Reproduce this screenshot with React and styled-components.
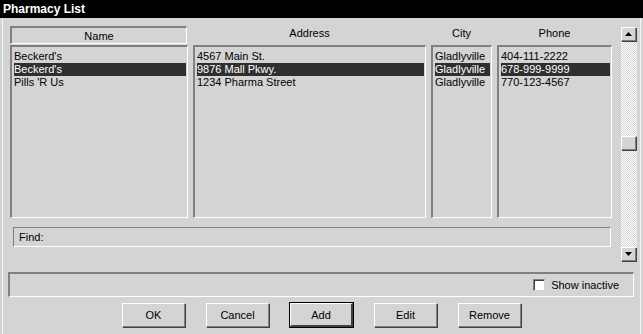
import React from 'react';
import styled, {createGlobalStyle, css} from 'styled-components';

const GlobalStyle = createGlobalStyle`
  html, body {
    margin: 0;
    padding: 0;
    background: #d4d4d4;
  }
  body {
    font-family: "Liberation Sans", Arial, sans-serif;
    font-size: 11px;
    color: #000;
  }
`;

const sunken = css`
  border-top: 2px solid #808080;
  border-left: 2px solid #808080;
  border-right: 1px solid #fff;
  border-bottom: 1px solid #fff;
`;

const raised = css`
  border-top: 1px solid #fff;
  border-left: 1px solid #fff;
  border-right: 1px solid #808080;
  border-bottom: 1px solid #808080;
  box-shadow: 1px 1px 0 #404040;
`;

const Window = styled.div`
  width: 643px;
  height: 334px;
  display: flex;
  flex-direction: column;
  background: #d4d4d4;
  box-shadow: inset 2px 0 0 #d4d4d4, inset 3px 0 0 #f4f4f4, inset -2px 0 0 #d4d4d4, inset -3px 0 0 #f4f4f4;
  overflow: hidden;
`;

const TitleBar = styled.div`
  height: 18px;
  background: #000;
  color: #fff;
  font-weight: bold;
  font-size: 12px;
  line-height: 18px;
  padding-left: 3px;
`;

const Body = styled.div`
  display: flex;
  flex-direction: column;
  padding: 8px 0 0 8px;
`;

const TopSection = styled.div`
  display: flex;
  padding-left: 2px;
`;

const ListArea = styled.div`
  width: 602px;
  display: flex;
  flex-direction: column;
`;

const Columns = styled.div`
  display: grid;
  grid-template-columns: 178px 233px 61px 115px;
  grid-template-rows: 18px 173px;
  column-gap: 5px;
  row-gap: 1px;
`;

const Header = styled.div`
  display: flex;
  align-items: center;
  justify-content: center;
  box-sizing: border-box;
  ${p => p.$boxed
    ? css`
      ${sunken}
      width: 177px;
      padding-top: 1px;
    `
    : css`
      padding-bottom: 4px;
    `}
`;

const List = styled.div`
  ${sunken}
  box-sizing: border-box;
  padding: 3px 1px 0 2px;
  background: #d4d4d4;
`;

const Item = styled.div`
  height: 13px;
  line-height: 13px;
  white-space: nowrap;
  overflow: hidden;
  background: ${p => (p.$selected ? '#2f2f2f' : 'transparent')};
  color: ${p => (p.$selected ? '#fff' : '#000')};
`;

const FindBox = styled.div`
  margin: 9px 0 0 3px;
  width: 598px;
  height: 20px;
  box-sizing: border-box;
  border-top: 1px solid #808080;
  border-left: 1px solid #808080;
  border-right: 1px solid #fff;
  border-bottom: 1px solid #fff;
  display: flex;
  align-items: center;
  padding-left: 5px;
`;

const ScrollBar = styled.div`
  margin: 1px 0 0 9px;
  width: 16px;
  height: 234px;
  display: flex;
  flex-direction: column;
  background: repeating-conic-gradient(#ffffff 0 25%, #d4d4d4 0 50%) 0 0 / 2px 2px;
`;

const ScrollButton = styled.div`
  ${raised}
  box-sizing: border-box;
  width: 15px;
  height: 14px;
  background: #d4d4d4;
  display: flex;
  align-items: center;
  justify-content: center;
`;

const Track = styled.div`
  flex: 1;
  position: relative;
`;

const Thumb = styled.div`
  ${raised}
  position: absolute;
  left: 0;
  top: 95px;
  width: 15px;
  height: 14px;
  box-sizing: border-box;
  background: #d4d4d4;
`;

const StatusPanel = styled.div`
  margin-top: 11px;
  width: 626px;
  height: 25px;
  box-sizing: border-box;
  ${sunken}
  display: flex;
  align-items: center;
  justify-content: flex-end;
  padding-right: 14px;
`;

const CheckLabel = styled.label`
  display: flex;
  align-items: center;
  gap: 6px;
`;

const CheckBox = styled.span`
  display: inline-block;
  width: 12px;
  height: 12px;
  box-sizing: border-box;
  background: #fff;
  border-top: 1px solid #808080;
  border-left: 1px solid #808080;
  border-right: 1px solid #d4d4d4;
  border-bottom: 1px solid #d4d4d4;
  box-shadow: inset 1px 1px 0 #404040;
`;

const ButtonRow = styled.div`
  margin-top: 6px;
  display: flex;
  justify-content: center;
  gap: 21px;
  padding-right: 8px;
`;

const Button = styled.button`
  width: 63px;
  height: 24px;
  box-sizing: border-box;
  font-family: "Liberation Sans", Arial, sans-serif;
  font-size: 11px;
  color: #000;
  background: #d4d4d4;
  padding: 0;
  border-top: 1px solid #fff;
  border-left: 1px solid #fff;
  border-right: 1px solid #808080;
  border-bottom: 1px solid #808080;
  box-shadow: 1px 1px 0 #404040;
  ${p => p.$default && css`
    outline: 1px solid #000;
    outline-offset: 0;
    border-right: 2px solid #404040;
    border-bottom: 2px solid #404040;
    box-shadow: none;
  `}
`;

const pharmacies = [
  {name: "Beckerd's", address: '4567 Main St.', city: 'Gladlyville', phone: '404-111-2222'},
  {name: "Beckerd's", address: '9876 Mall Pkwy.', city: 'Gladlyville', phone: '678-999-9999'},
  {name: "Pills 'R Us", address: '1234 Pharma Street', city: 'Gladlyville', phone: '770-123-4567'},
];

const selectedIndex = 1;

const Arrow = ({down}) => (
  <svg width="7" height="4" viewBox="0 0 7 4">
    <polygon points={down ? '0,0 7,0 3.5,4' : '3.5,0 7,4 0,4'} fill="#000" />
  </svg>
);

export default function App() {
  const fields = ['name', 'address', 'city', 'phone'];
  return (
    <>
      <GlobalStyle />
      <Window>
        <TitleBar>Pharmacy List</TitleBar>
        <Body>
          <TopSection>
            <ListArea>
              <Columns>
                <Header $boxed>Name</Header>
                <Header>Address</Header>
                <Header>City</Header>
                <Header>Phone</Header>
                {fields.map(field => (
                  <List key={field}>
                    {pharmacies.map((p, i) => (
                      <Item key={i} $selected={i === selectedIndex}>{p[field]}</Item>
                    ))}
                  </List>
                ))}
              </Columns>
              <FindBox>Find:</FindBox>
            </ListArea>
            <ScrollBar>
              <ScrollButton><Arrow /></ScrollButton>
              <Track><Thumb /></Track>
              <ScrollButton><Arrow down /></ScrollButton>
            </ScrollBar>
          </TopSection>
          <StatusPanel>
            <CheckLabel>
              <CheckBox />
              Show inactive
            </CheckLabel>
          </StatusPanel>
          <ButtonRow>
            <Button>OK</Button>
            <Button>Cancel</Button>
            <Button $default>Add</Button>
            <Button>Edit</Button>
            <Button>Remove</Button>
          </ButtonRow>
        </Body>
      </Window>
    </>
  );
}
